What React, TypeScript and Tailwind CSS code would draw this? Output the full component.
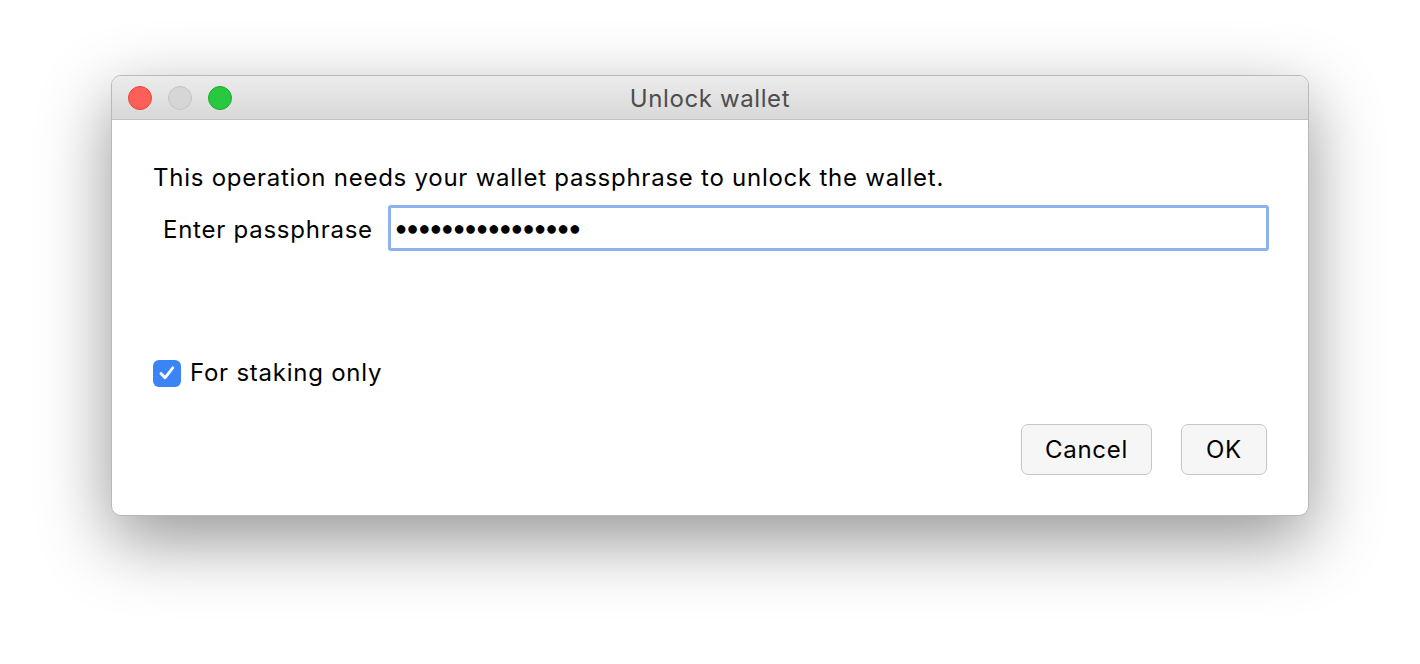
import React from 'react';

const font = { fontFamily: 'Inter, "Liberation Sans", Arial, sans-serif' };

function TrafficLights() {
  return (
    <div className="flex items-center gap-[16px]">
      <span className="w-[24px] h-[24px] rounded-full bg-[#fe5f57] border border-[#e2463f]" />
      <span className="w-[24px] h-[24px] rounded-full bg-[#d6d6d6] border border-[#c4c4c4]" />
      <span className="w-[24px] h-[24px] rounded-full bg-[#28c840] border border-[#1eaa31]" />
    </div>
  );
}

export default function App() {
  return (
    <div className="w-[1420px] h-[664px] bg-white flex justify-center pt-[75px]" style={font}>
      <div className="w-[1198px] h-[441px] rounded-[10px] bg-white border border-[#b9b9b9] shadow-[0_24px_70px_rgba(0,0,0,0.42)] overflow-hidden flex flex-col">
        {/* Title bar */}
        <div className="relative h-[44px] shrink-0 bg-gradient-to-b from-[#ececec] to-[#d8d8d8] border-b border-[#c3c3c3] flex items-center justify-center">
          <div className="absolute left-[16px] top-[10px]">
            <TrafficLights />
          </div>
          <span className="text-[24px] tracking-[0.6px] text-[#4d4d4d] leading-none pt-[2px]">Unlock wallet</span>
        </div>

        {/* Body */}
        <div className="flex-1 flex flex-col pl-[41px] pr-[39px] pt-[42px] text-black text-[24px] tracking-[0.75px]">
          <p className="leading-[32px]">
            This operation needs your wallet passphrase to unlock the wallet.
          </p>
          <div className="flex items-center mt-[11px]">
            <span className="pl-[10px] w-[235px] shrink-0 pt-[3px]">Enter passphrase</span>
            <div className="flex-1 h-[46px] border-[3px] border-[#8db3ea] rounded-[3px] flex items-center pl-[4px]">
              <span className="text-[20px] tracking-[-0.5px] leading-none" style={{ fontFamily: '"Liberation Sans", Arial, sans-serif' }}>
                {'\u25CF'.repeat(16)}
              </span>
            </div>
          </div>

          <label className="flex items-center gap-[9px] mt-[104px]">
            <span className="w-[28px] h-[27px] rounded-[6px] bg-[#3b84f6] flex items-center justify-center">
              <svg width="20" height="20" viewBox="0 0 20 20" fill="none">
                <path d="M4 10.5 L8 14.8 L15.8 4.8" stroke="white" strokeWidth="2.8" strokeLinecap="round" strokeLinejoin="round" />
              </svg>
            </span>
            <span>For staking only</span>
          </label>

          <div className="flex justify-end gap-[29px] mt-[33px] pr-[2px]">
            <button className="w-[131px] h-[51px] rounded-[7px] bg-[#f6f6f6] border border-[#c6c6c6] text-black tracking-[0.75px]">
              Cancel
            </button>
            <button className="w-[86px] h-[51px] rounded-[7px] bg-[#f6f6f6] border border-[#c6c6c6] text-black tracking-[0.75px]">
              OK
            </button>
          </div>
        </div>
      </div>
    </div>
  );
}
